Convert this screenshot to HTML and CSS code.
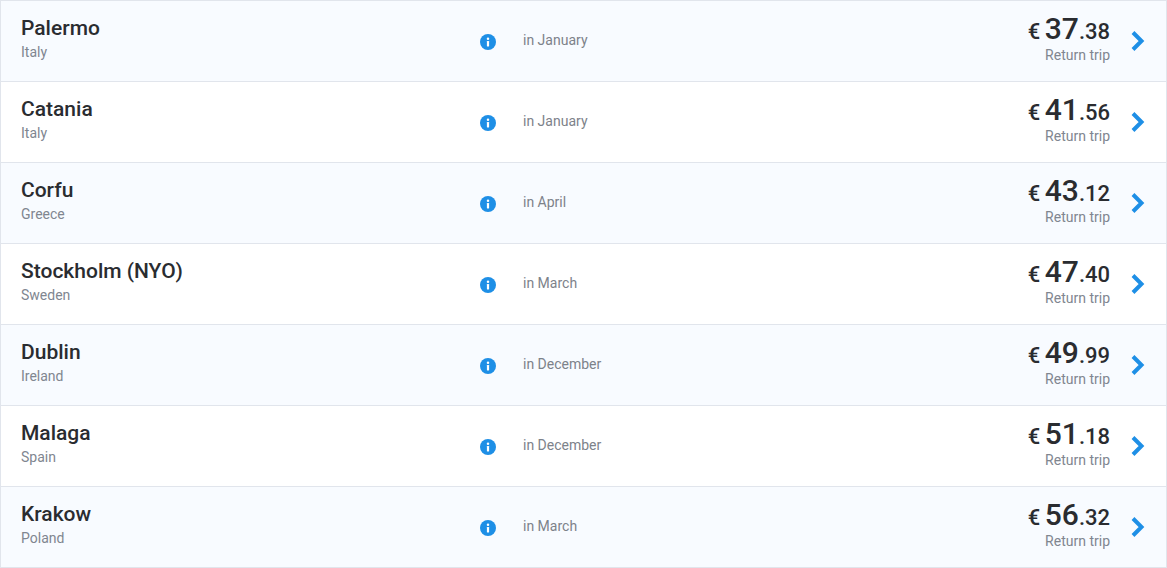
FILE: index.html
```html
<!DOCTYPE html>
<html lang="en">
<head>
<meta charset="utf-8">
<title>Cheap flights</title>
<link rel="stylesheet" href="styles.css">
</head>
<body>
<ul class="list">
<li class="row"><div class="place"><div class="city">Palermo</div><div class="country">Italy</div></div><svg class="info" viewBox="0 0 16 16"><circle cx="8" cy="8" r="8"/><rect x="6.900" y="7" width="2.200" height="5.400" rx=".4" fill="#fff"/><circle cx="8" cy="4.700" r="1.250" fill="#fff"/></svg><div class="when">in January</div><div class="price"><div class="amount"><span class="cur">€</span> <span class="big">37</span>.38</div><div class="trip">Return trip</div></div><svg class="chev" viewBox="0 0 16 24"><path d="M3 3.500l8.500 8.500-8.500 8.500"/></svg></li>
<li class="row"><div class="place"><div class="city">Catania</div><div class="country">Italy</div></div><svg class="info" viewBox="0 0 16 16"><circle cx="8" cy="8" r="8"/><rect x="6.900" y="7" width="2.200" height="5.400" rx=".4" fill="#fff"/><circle cx="8" cy="4.700" r="1.250" fill="#fff"/></svg><div class="when">in January</div><div class="price"><div class="amount"><span class="cur">€</span> <span class="big">41</span>.56</div><div class="trip">Return trip</div></div><svg class="chev" viewBox="0 0 16 24"><path d="M3 3.500l8.500 8.500-8.500 8.500"/></svg></li>
<li class="row"><div class="place"><div class="city">Corfu</div><div class="country">Greece</div></div><svg class="info" viewBox="0 0 16 16"><circle cx="8" cy="8" r="8"/><rect x="6.900" y="7" width="2.200" height="5.400" rx=".4" fill="#fff"/><circle cx="8" cy="4.700" r="1.250" fill="#fff"/></svg><div class="when">in April</div><div class="price"><div class="amount"><span class="cur">€</span> <span class="big">43</span>.12</div><div class="trip">Return trip</div></div><svg class="chev" viewBox="0 0 16 24"><path d="M3 3.500l8.500 8.500-8.500 8.500"/></svg></li>
<li class="row"><div class="place"><div class="city">Stockholm (NYO)</div><div class="country">Sweden</div></div><svg class="info" viewBox="0 0 16 16"><circle cx="8" cy="8" r="8"/><rect x="6.900" y="7" width="2.200" height="5.400" rx=".4" fill="#fff"/><circle cx="8" cy="4.700" r="1.250" fill="#fff"/></svg><div class="when">in March</div><div class="price"><div class="amount"><span class="cur">€</span> <span class="big">47</span>.40</div><div class="trip">Return trip</div></div><svg class="chev" viewBox="0 0 16 24"><path d="M3 3.500l8.500 8.500-8.500 8.500"/></svg></li>
<li class="row"><div class="place"><div class="city">Dublin</div><div class="country">Ireland</div></div><svg class="info" viewBox="0 0 16 16"><circle cx="8" cy="8" r="8"/><rect x="6.900" y="7" width="2.200" height="5.400" rx=".4" fill="#fff"/><circle cx="8" cy="4.700" r="1.250" fill="#fff"/></svg><div class="when">in December</div><div class="price"><div class="amount"><span class="cur">€</span> <span class="big">49</span>.99</div><div class="trip">Return trip</div></div><svg class="chev" viewBox="0 0 16 24"><path d="M3 3.500l8.500 8.500-8.500 8.500"/></svg></li>
<li class="row"><div class="place"><div class="city">Malaga</div><div class="country">Spain</div></div><svg class="info" viewBox="0 0 16 16"><circle cx="8" cy="8" r="8"/><rect x="6.900" y="7" width="2.200" height="5.400" rx=".4" fill="#fff"/><circle cx="8" cy="4.700" r="1.250" fill="#fff"/></svg><div class="when">in December</div><div class="price"><div class="amount"><span class="cur">€</span> <span class="big">51</span>.18</div><div class="trip">Return trip</div></div><svg class="chev" viewBox="0 0 16 24"><path d="M3 3.500l8.500 8.500-8.500 8.500"/></svg></li>
<li class="row"><div class="place"><div class="city">Krakow</div><div class="country">Poland</div></div><svg class="info" viewBox="0 0 16 16"><circle cx="8" cy="8" r="8"/><rect x="6.900" y="7" width="2.200" height="5.400" rx=".4" fill="#fff"/><circle cx="8" cy="4.700" r="1.250" fill="#fff"/></svg><div class="when">in March</div><div class="price"><div class="amount"><span class="cur">€</span> <span class="big">56</span>.32</div><div class="trip">Return trip</div></div><svg class="chev" viewBox="0 0 16 24"><path d="M3 3.500l8.500 8.500-8.500 8.500"/></svg></li>
</ul>
</body>
</html>
```
FILE: styles.css
```css
html, body {
  margin: 0;
  padding: 0;
  background: #fff;
  overflow: hidden;
}
.list {
  list-style: none;
  margin: 0;
  padding: 0;
  font-family: Roboto, sans-serif;
  border-top: 1px solid #e1e5ec;
}
.row {
  box-sizing: border-box;
  height: 81px;
  display: flex;
  align-items: center;
  padding: 0 20px;
  border-bottom: 1px solid #e1e5ec;
  border-left: 1px solid #e1e5ec;
  border-right: 1px solid #e1e5ec;
}
.row:nth-child(odd) {
  background: #f8fbff;
}
.place {
  width: 459px;
  margin-top: -4px;
}
.city {
  font-size: 21px;
  font-weight: 500;
  line-height: 24px;
  color: #2a2c30;
}
.country {
  margin-top: 2px;
  font-size: 14px;
  line-height: 20px;
  color: #808690;
}
.info {
  width: 16px;
  height: 16px;
  fill: #1e8fe6;
  margin-top: 2px;
  flex: none;
}
.when {
  margin-left: 27px;
  margin-top: -2px;
  font-size: 14px;
  color: #7d828a;
  flex: 1;
}
.price {
  text-align: right;
  margin-top: -5px;
}
.amount {
  font-size: 22px;
  font-weight: 500;
  line-height: 29px;
  color: #2a2c30;
}
.cur {
  margin-right: -1px;
}
.big {
  font-size: 30px;
}
.trip {
  margin-top: 2px;
  font-size: 14px;
  line-height: 15px;
  color: #808690;
}
.chev {
  width: 16px;
  height: 24px;
  margin-left: 20px;
  fill: none;
  stroke: #1e8fe6;
  stroke-width: 4;
  flex: none;
}
```
